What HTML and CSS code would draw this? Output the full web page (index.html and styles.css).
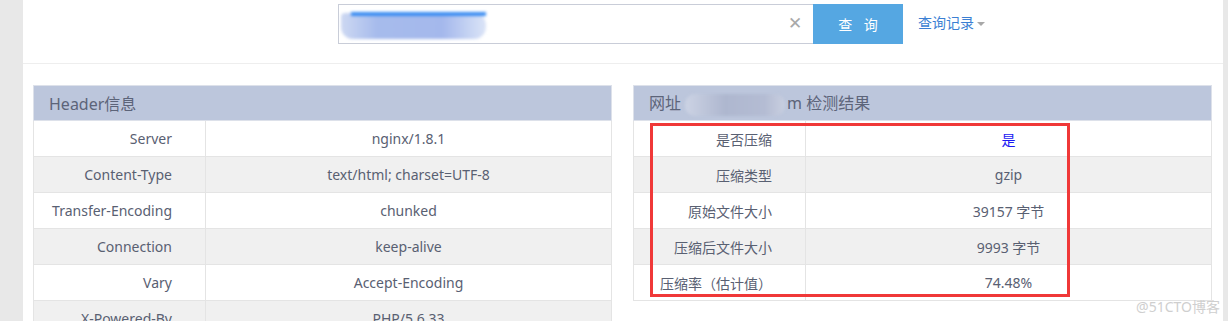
FILE: index.html
```html
<!DOCTYPE html>
<html lang="zh-CN">
<head>
    <meta charset="UTF-8">
    <title>Gzip压缩检测</title>
    <link rel="stylesheet" href="styles.css">
</head>
<body>
    <div class="page">
        <div class="search-bar">
            <div class="search-box">
                <div class="search-input">
                    <span class="blur-url"></span>
                    <span class="clear">&#x2715;</span>
                </div>
                <button class="search-btn">查 询</button>
            </div>
            <a class="history">查询记录<span class="caret"></span></a>
        </div>

        <div class="tables">
            <table class="info">
                <colgroup><col class="kcol"><col></colgroup>
                <tr><th colspan="2">Header信息</th></tr>
                <tr><td class="key">Server</td><td class="val">nginx/1.8.1</td></tr>
                <tr><td class="key">Content-Type</td><td class="val">text/html; charset=UTF-8</td></tr>
                <tr><td class="key">Transfer-Encoding</td><td class="val">chunked</td></tr>
                <tr><td class="key">Connection</td><td class="val">keep-alive</td></tr>
                <tr><td class="key">Vary</td><td class="val">Accept-Encoding</td></tr>
                <tr><td class="key">X-Powered-By</td><td class="val">PHP/5.6.33</td></tr>
            </table>

            <div class="result-wrap">
                <table class="info">
                    <colgroup><col class="kcol"><col></colgroup>
                    <tr><th colspan="2">网址<span class="blur-host"></span>m 检测结果</th></tr>
                    <tr><td class="key">是否压缩</td><td class="val"><span class="yes">是</span></td></tr>
                    <tr><td class="key">压缩类型</td><td class="val">gzip</td></tr>
                    <tr><td class="key">原始文件大小</td><td class="val">39157 字节</td></tr>
                    <tr><td class="key">压缩后文件大小</td><td class="val">9993 字节</td></tr>
                    <tr><td class="key">压缩率（估计值）</td><td class="val">74.48%</td></tr>
                </table>
                <!-- annotation box drawn over the screenshot -->
                <div class="mark"></div>
            </div>
        </div>

        <div class="watermark">@51CTO博客</div>
    </div>
</body>
</html>
```

FILE: styles.css
```css
html, body {
    margin: 0;
    height: 100%;
}
body {
    background-color: #e8e8e8;
    font-family: "Noto Sans", "Noto Sans CJK SC", sans-serif;
    font-size: 14px;
    color: #596072;
    overflow: hidden;
}
.page {
    position: relative;
    margin: 0 5px 0 23px;
    height: 100%;
    background-color: #fff;
}
.search-bar {
    display: flex;
    align-items: flex-start;
    height: 63px;
    border-bottom: 1px solid #eeeeee;
    padding-left: 315px;
}
.search-box {
    display: flex;
    margin-top: 4px;
    height: 40px;
}
.search-input {
    position: relative;
    width: 474px;
    height: 38px;
    border: 1px solid #c9cdd8;
    border-right: none;
}
.blur-url {
    position: absolute;
    left: 2px;
    top: 8px;
    width: 145px;
    height: 26px;
    border-radius: 4px 12px 12px 12px;
    background: linear-gradient(to right, #cdd8f2, #a6bbec 25%, #a4b8ec 70%, #dbe4f7);
    filter: blur(1.5px);
}
.blur-url::before {
    content: "";
    position: absolute;
    left: 10px;
    top: -1px;
    width: 135px;
    height: 4px;
    background-color: #3b8df2;
}
.clear {
    position: absolute;
    right: 11px;
    top: 8px;
    font-size: 17px;
    color: #a9a9a9;
    line-height: 20px;
}
.search-btn {
    width: 90px;
    height: 40px;
    border: none;
    background-color: #55a7e2;
    color: #fff;
    font-family: inherit;
    font-size: 14px;
    letter-spacing: 4px;
    padding: 0 0 0 4px;
}
.history {
    margin: 13px 0 0 15px;
    color: #3b7fd3;
    font-size: 14px;
    line-height: 20px;
}
.caret {
    display: inline-block;
    margin-left: 3px;
    vertical-align: middle;
    border-left: 4px solid transparent;
    border-right: 4px solid transparent;
    border-top: 4px solid #a8a8a8;
}
.tables {
    display: grid;
    grid-template-columns: 579px 579px;
    gap: 21px;
    padding: 21px 10px 0;
    align-items: start;
}
.result-wrap {
    position: relative;
}
.info {
    width: 100%;
    border-collapse: collapse;
    table-layout: fixed;
}
.info .kcol {
    width: 172px;
}
.info th {
    height: 34px;
    padding: 0 0 0 15px;
    text-align: left;
    font-weight: normal;
    font-size: 16px;
    color: #5c6479;
    background-color: #bcc6dc;
    border: 1px solid #dde1ea;
}
.info td {
    height: 35px;
    padding: 0;
    border: 1px solid #e4e4e4;
    white-space: nowrap;
}
.info tr:nth-child(odd) td {
    background-color: #f0f0f0;
}
.info .key {
    padding-right: 33px;
    text-align: right;
}
.info .val {
    text-align: center;
}
.yes {
    color: #1b18f2;
}
.blur-host {
    display: inline-block;
    width: 100px;
    height: 22px;
    margin: 0 2px 0 4px;
    vertical-align: middle;
    border-radius: 10px;
    background: linear-gradient(to right, #ccd3e4, #aeb7cf 40%, #b4bcd3 80%, #c8cfe0);
    filter: blur(1.5px);
}
.mark {
    position: absolute;
    left: 17px;
    top: 38px;
    width: 414px;
    height: 168px;
    border: 3px solid #f03838;
}
.watermark {
    position: absolute;
    right: 3px;
    bottom: 5px;
    font-size: 14px;
    color: #cfcfcf;
}
```
